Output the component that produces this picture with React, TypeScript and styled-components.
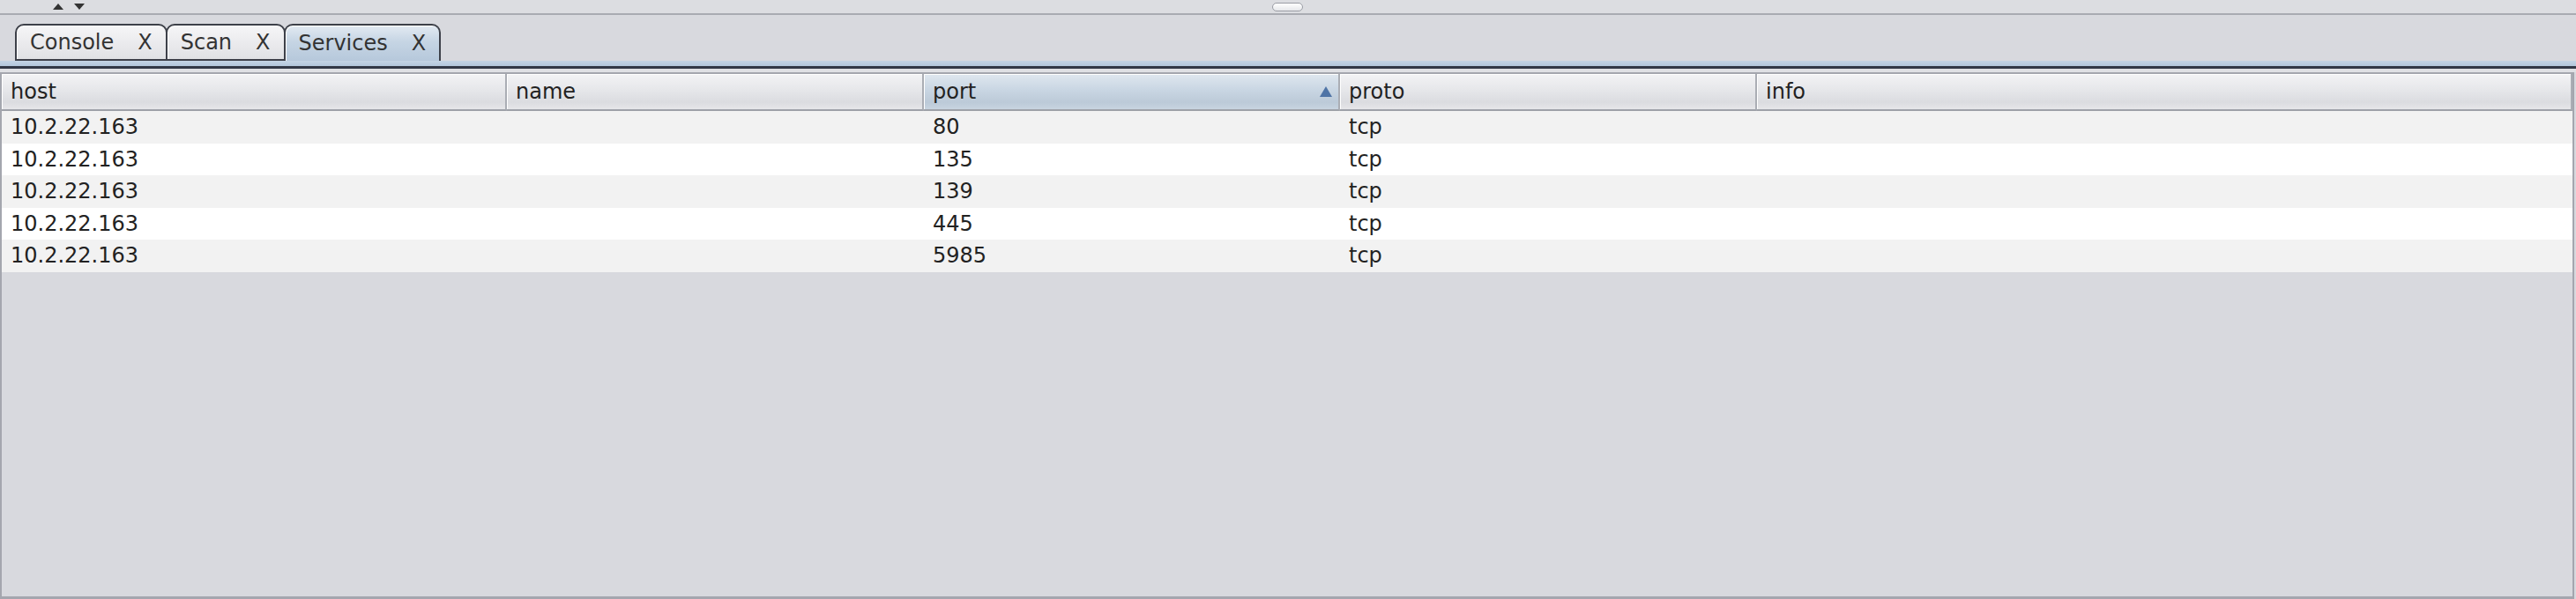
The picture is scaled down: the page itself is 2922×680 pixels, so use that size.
import React from 'react';
import styled, { createGlobalStyle } from 'styled-components';

const Global = createGlobalStyle`
  html, body { margin: 0; padding: 0; background: #d8d9de; }
  body {
    width: 2922px; height: 680px; overflow: hidden;
    font-family: "DejaVu Sans", "Liberation Sans", sans-serif;
    font-size: 24px; color: #222;
  }
`;

const Frame = styled.div`
  display: flex;
  flex-direction: column;
  width: 2922px;
  height: 680px;
  background: #d8d9de;
`;

const Divider = styled.div`
  height: 15px;
  flex: none;
  display: flex;
  align-items: center;
  padding-left: 60px;
  background: #dcdde1;
  border-bottom: 2px solid #a9abb2;
`;

const Arrow = styled.span<{ $dir: 'up' | 'down' }>`
  width: 0;
  height: 0;
  border-left: 6px solid transparent;
  border-right: 6px solid transparent;
  ${p => (p.$dir === 'up' ? 'border-bottom: 7px solid #333;' : 'border-top: 7px solid #333;')}
  margin-right: 12px;
`;

const Grip = styled.span`
  margin-left: 1335px;
  width: 33px;
  height: 8px;
  border: 1px solid #9b9da5;
  border-radius: 5px;
  background: linear-gradient(#ffffff, #e6e7ea);
`;

const TabStrip = styled.div`
  height: 42px;
  flex: none;
  display: flex;
  align-items: flex-end;
  padding: 10px 0 0 17px;
`;

const Tab = styled.div<{ $active?: boolean }>`
  height: 42px;
  box-sizing: border-box;
  display: flex;
  align-items: center;
  gap: 27px;
  padding: 0 15px 0 15px;
  margin-right: -2px;
  border: 2px solid #3d4049;
  border-bottom: ${p => (p.$active ? 'none' : '2px solid #3d4049')};
  border-radius: 10px 10px 0 0;
  color: #333;
  box-shadow: inset 1px 1px 0 #ffffff;
  background: ${p =>
    p.$active
      ? 'linear-gradient(#e3eaf2 0%, #c6d5e4 45%, #b6c8db 100%)'
      : 'linear-gradient(#f6f6f7 0%, #ebebee 50%, #e0e1e4 100%)'};
`;

const Close = styled.span`
  color: #333;
`;

const Band = styled.div`
  height: 6px;
  flex: none;
  background: linear-gradient(#c4d4e5, #b3c7dc);
`;

const DarkRule = styled.div`
  height: 3px;
  flex: none;
  background: #323846;
`;

const Gap = styled.div`
  height: 4px;
  flex: none;
  background: #dfe0e4;
`;

const ScrollPane = styled.div`
  flex: 1;
  margin-right: 2px;
  border: 2px solid #a4a6ae;
  border-bottom-width: 3px;
  background: #d8d9de;
  display: flex;
  flex-direction: column;
  min-height: 0;
`;

const Grid = styled.div`
  display: grid;
  grid-template-columns: 573px 473px 472px 473px 1fr;
`;

const HeaderCell = styled.div<{ $sorted?: boolean }>`
  height: 40px;
  display: flex;
  align-items: center;
  justify-content: space-between;
  padding: 0 7px 0 10px;
  border-bottom: 2px solid #9ea1a8;
  border-right: 2px solid #aaadb4;
  box-shadow: inset 1px 1px 0 #ffffff;
  color: #222;
  background: ${p =>
    p.$sorted
      ? 'linear-gradient(#dfe7ef 0%, #c9d6e3 45%, #bccad8 80%, #c8d4e0 100%)'
      : 'linear-gradient(#f3f3f5 0%, #e6e7ea 45%, #dbdce0 80%, #e6e6e9 100%)'};
  &:last-child { border-right: none; }
`;

const SortArrow = styled.span`
  width: 0;
  height: 0;
  border-left: 7px solid transparent;
  border-right: 7px solid transparent;
  border-bottom: 12px solid #4f74a6;
`;

const Cell = styled.div<{ $odd: boolean }>`
  height: 36.5px;
  display: flex;
  align-items: center;
  padding-left: 10px;
  background: ${p => (p.$odd ? '#f2f2f2' : '#ffffff')};
  color: #222;
  white-space: nowrap;
`;

const columns = ['host', 'name', 'port', 'proto', 'info'];
const rows = [
  ['10.2.22.163', '', '80', 'tcp', ''],
  ['10.2.22.163', '', '135', 'tcp', ''],
  ['10.2.22.163', '', '139', 'tcp', ''],
  ['10.2.22.163', '', '445', 'tcp', ''],
  ['10.2.22.163', '', '5985', 'tcp', ''],
];

export default function App() {
  return (
    <Frame>
      <Global />
      <Divider>
        <Arrow $dir="up" />
        <Arrow $dir="down" />
        <Grip />
      </Divider>
      <TabStrip>
        <Tab>
          <span>Console</span>
          <Close>X</Close>
        </Tab>
        <Tab>
          <span>Scan</span>
          <Close>X</Close>
        </Tab>
        <Tab $active>
          <span>Services</span>
          <Close>X</Close>
        </Tab>
      </TabStrip>
      <Band />
      <DarkRule />
      <Gap />
      <ScrollPane>
        <Grid>
          {columns.map(c => (
            <HeaderCell key={c} $sorted={c === 'port'}>
              <span>{c}</span>
              {c === 'port' && <SortArrow />}
            </HeaderCell>
          ))}
          {rows.map((r, i) =>
            r.map((v, j) => (
              <Cell key={`${i}-${j}`} $odd={i % 2 === 0}>
                {v}
              </Cell>
            ))
          )}
        </Grid>
      </ScrollPane>
    </Frame>
  );
}
